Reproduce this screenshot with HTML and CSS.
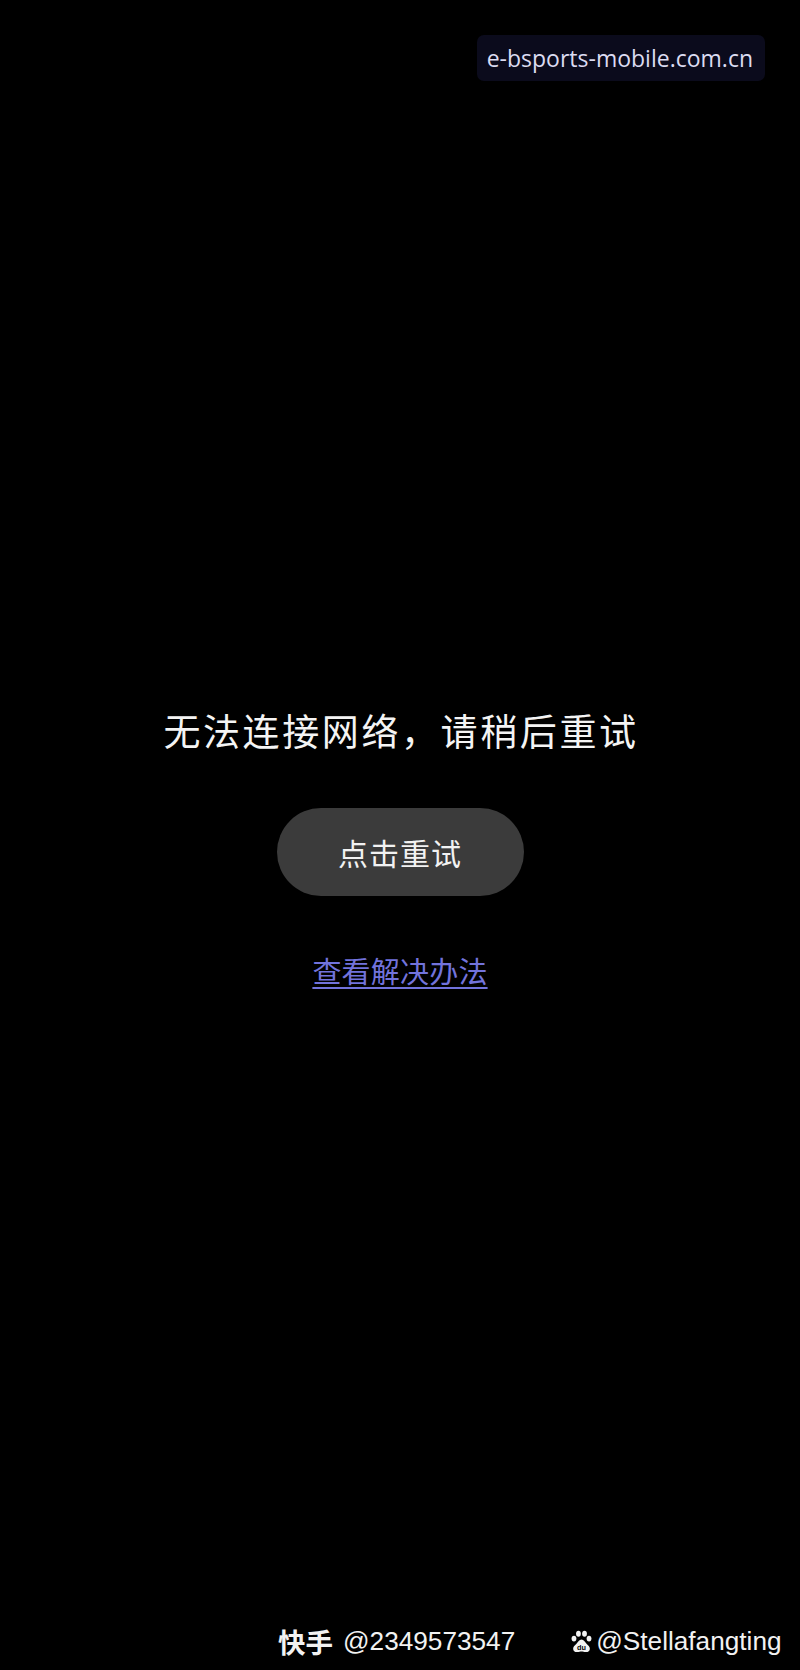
FILE: index.html
```html
<!DOCTYPE html>
<html lang="zh-CN">
<head>
<meta charset="utf-8">
<title>无法连接网络</title>
<link rel="stylesheet" href="styles.css">
</head>
<body>
<div class="page">
  <header class="top">
    <span class="domain">e-bsports-mobile.com.cn</span>
  </header>
  <main class="center">
    <h1 class="title">无法连接网络，请稍后重试</h1>
    <button class="retry" type="button">点击重试</button>
    <a class="help" href="#">查看解决办法</a>
  </main>
  <footer class="foot">
    <span class="ks"><b class="ks-name">快手</b><span class="ks-id">@2349573547</span></span>
    <span class="bd">
      <svg class="paw" viewBox="0 0 22 22" width="23" height="23" aria-hidden="true">
        <ellipse cx="3.8" cy="8.2" rx="2.3" ry="2.8" fill="#f2f2f2"/>
        <ellipse cx="8.1" cy="3.5" rx="2.3" ry="2.9" fill="#f2f2f2"/>
        <ellipse cx="13.9" cy="3.5" rx="2.3" ry="2.9" fill="#f2f2f2"/>
        <ellipse cx="18.2" cy="8.2" rx="2.3" ry="2.8" fill="#f2f2f2"/>
        <path d="M11 9.2c-2.2 0-3.2 2.4-4.8 4-1.6 1.6-3.2 2.6-3.2 4.7 0 2.3 1.9 3.4 4 3.2 1.6-.1 2.6-.6 4-.6s2.4.5 4 .6c2.1.2 4-.9 4-3.2 0-2.1-1.6-3.1-3.2-4.7-1.6-1.6-2.6-4-4.8-4z" fill="#f2f2f2"/>
        <text x="11" y="19.3" class="du">du</text>
      </svg>
      <span>@Stellafangting</span>
    </span>
  </footer>
</div>
</body>
</html>
```

FILE: styles.css
```css
html, body {
  margin: 0;
  padding: 0;
  background: #000;
}

.page {
  width: 800px;
  height: 1670px;
  display: flex;
  flex-direction: column;
  background: #000;
  color: #fff;
  font-family: "Noto Sans CJK SC", "Noto Sans", sans-serif;
}

.top {
  display: flex;
  justify-content: flex-end;
  padding: 35px 35px 0 0;
}

.domain {
  display: inline-block;
  background: #0b0b1c;
  color: #dcdcf2;
  font-family: "Open Sans", "Noto Sans", sans-serif;
  font-size: 23px;
  line-height: 46px;
  height: 46px;
  padding: 0 12px 0 10px;
  border-radius: 7px;
}

.center {
  display: flex;
  flex-direction: column;
  align-items: center;
  margin-top: 625px;
}

.title {
  margin: 0;
  font-size: 37px;
  font-weight: 400;
  line-height: 48px;
  letter-spacing: 2.6px;
  color: #f4f4f4;
  padding-left: 2px;
}

.retry {
  margin-top: 54px;
  width: 247px;
  height: 88px;
  border: none;
  border-radius: 44px;
  background: #3b3b3b;
  color: #f2f2f2;
  font-family: "Noto Sans CJK SC", "Noto Sans", sans-serif;
  font-size: 30px;
  letter-spacing: 1px;
  padding: 0;
}

.help {
  margin-top: 55px;
  color: #7273dc;
  font-size: 29px;
  line-height: 38px;
  letter-spacing: 0.2px;
  text-decoration: underline;
  text-decoration-thickness: 2px;
  text-underline-offset: 4px;
}

.foot {
  margin-top: auto;
  display: flex;
  align-items: center;
  padding: 0 0 14px 278px;
  font-family: "Liberation Sans", Arial, sans-serif;
  font-size: 26.2px;
  line-height: 30px;
  color: #f2f2f2;
}

.ks {
  display: flex;
  align-items: center;
  gap: 10px;
}

.ks-name {
  font-family: "Noto Sans CJK SC", sans-serif;
  font-weight: 700;
  font-size: 27.5px;
}

.bd {
  display: flex;
  align-items: center;
  margin-left: 55px;
  gap: 3px;
}

.paw {
  display: block;
  width: 23px;
  height: 23px;
}

.du {
  font-family: "Liberation Sans", Arial, sans-serif;
  font-size: 7px;
  font-weight: 700;
  fill: #000;
  text-anchor: middle;
}
```
